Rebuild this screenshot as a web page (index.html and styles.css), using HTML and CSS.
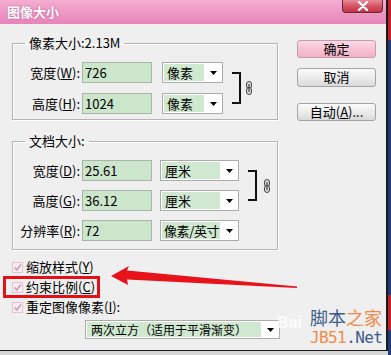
FILE: index.html
```html
<!DOCTYPE html>
<html lang="zh-CN">
<head>
<meta charset="utf-8">
<title>图像大小</title>
<link rel="stylesheet" href="styles.css">
</head>
<body>
<div class="dialog">
  <div class="titlebar">
    <span class="title">图像大小</span>
    <span class="close">
      <svg width="14" height="10" viewBox="0 0 14 10"><path d="M3 1 L11 9 M11 1 L3 9" stroke="#fff" stroke-width="2.4" stroke-linecap="round"/></svg>
    </span>
  </div>
  <div class="content">
    <div class="left">
      <fieldset class="group g1">
        <legend>像素大小:2.13M</legend>
        <div class="grid grid1">
          <label class="lbl r1">宽度(<u>W</u>):</label>
          <div class="input r1">726</div>
          <div class="select sel1 r1"><span class="val">像素</span><span class="arr"><svg width="7" height="4" viewBox="0 0 7 4"><path d="M0 0H7L3.5 4Z" fill="#000"/></svg></span></div>
          <div class="bracket"></div>
          <div class="link"><svg width="8" height="14" viewBox="0 0 8 14"><rect x="1.5" y="0.5" width="5" height="7" rx="2.5" fill="#ddd" stroke="#444"/><rect x="1.5" y="6.5" width="5" height="7" rx="2.5" fill="#ddd" stroke="#444"/><path d="M4 3V11" stroke="#444" stroke-width="1.2"/></svg></div>
          <label class="lbl r2">高度(<u>H</u>):</label>
          <div class="input r2">1024</div>
          <div class="select sel1 r2"><span class="val">像素</span><span class="arr"><svg width="7" height="4" viewBox="0 0 7 4"><path d="M0 0H7L3.5 4Z" fill="#000"/></svg></span></div>
        </div>
      </fieldset>
      <fieldset class="group g2">
        <legend>文档大小:</legend>
        <div class="grid grid2">
          <label class="lbl r1">宽度(<u>D</u>):</label>
          <div class="input r1">25.61</div>
          <div class="select sel2 r1"><span class="val">厘米</span><span class="arr"><svg width="7" height="4" viewBox="0 0 7 4"><path d="M0 0H7L3.5 4Z" fill="#000"/></svg></span></div>
          <div class="bracket"></div>
          <div class="link"><svg width="8" height="14" viewBox="0 0 8 14"><rect x="1.5" y="0.5" width="5" height="7" rx="2.5" fill="#ddd" stroke="#444"/><rect x="1.5" y="6.5" width="5" height="7" rx="2.5" fill="#ddd" stroke="#444"/><path d="M4 3V11" stroke="#444" stroke-width="1.2"/></svg></div>
          <label class="lbl r2">高度(<u>G</u>):</label>
          <div class="input r2">36.12</div>
          <div class="select sel2 r2"><span class="val">厘米</span><span class="arr"><svg width="7" height="4" viewBox="0 0 7 4"><path d="M0 0H7L3.5 4Z" fill="#000"/></svg></span></div>
          <label class="lbl r3">分辨率(<u>R</u>):</label>
          <div class="input r3">72</div>
          <div class="select sel2 r3"><span class="val tight">像素/英寸</span><span class="arr"><svg width="7" height="4" viewBox="0 0 7 4"><path d="M0 0H7L3.5 4Z" fill="#000"/></svg></span></div>
        </div>
      </fieldset>
      <div class="checks">
        <div class="check"><span class="box"><svg width="9" height="9" viewBox="0 0 9 9"><path d="M1.5 4.5 L3.8 7 L7.8 1.5" fill="none" stroke="#d896b6" stroke-width="1.6"/></svg></span>缩放样式(<u>Y</u>)</div>
        <div class="check"><span class="box"><svg width="9" height="9" viewBox="0 0 9 9"><path d="M1.5 4.5 L3.8 7 L7.8 1.5" fill="none" stroke="#d896b6" stroke-width="1.6"/></svg></span>约束比例(<u>C</u>)</div>
        <div class="check"><span class="box"><svg width="9" height="9" viewBox="0 0 9 9"><path d="M1.5 4.5 L3.8 7 L7.8 1.5" fill="none" stroke="#d896b6" stroke-width="1.6"/></svg></span>重定图像像素(<u>I</u>):</div>
      </div>
      <div class="select sel3"><span class="val">两次立方（适用于平滑渐变）</span><span class="arr"><svg width="7" height="4" viewBox="0 0 7 4"><path d="M0 0H7L3.5 4Z" fill="#000"/></svg></span></div>
    </div>
    <div class="right">
      <div class="btn ok">确定</div>
      <div class="btn cancel">取消</div>
      <div class="btn auto">自动(<u>A</u>)...</div>
    </div>
  </div>
  <div class="highlight"></div>
  <svg class="arrow" width="391" height="355" viewBox="0 0 391 355"><polygon points="111,276 129,266 127,270.5 297,286.5 297,288 127,279.5 128,285" fill="#e8121a"/></svg>
  <div class="watermark">
    <span class="bai">Bai</span>
    <div class="wm1"><span class="blue">脚本</span><span class="orange">之家</span></div>
    <div class="wm2"><span class="orange">JB51</span><span class="blue">.Net</span></div>
  </div>
</div>
<div class="below"></div>
</body>
</html>
```

FILE: styles.css
```css
html, body {
  margin: 0;
  padding: 0;
}
body {
  width: 391px;
  height: 355px;
  overflow: hidden;
  background: linear-gradient(to bottom, #c22028 0, #c22028 40px, #1f3a78 40px, #1f3a78 295px, #c22028 295px, #c22028 330px, #1f3a78 330px);
  font-family: "Noto Sans CJK SC", "Noto Sans", sans-serif;
  font-size: 13px;
  color: #000;
}
u {
  text-decoration: underline;
  text-underline-offset: 1px;
}
.dialog {
  position: relative;
  width: 386px;
  height: 350px;
  border-right: 2px solid #1a1a1a;
  border-bottom: 1px solid #1a1a1a;
  background: #efefef;
  display: flex;
  flex-direction: column;
}
.below {
  width: 388px;
  height: 4px;
  background: #d6d6d6;
}
.titlebar {
  height: 24px;
  flex: none;
  background: linear-gradient(to bottom, #f4aed0 0%, #ec94c2 60%, #e884ba 100%);
  display: flex;
  align-items: flex-start;
}
.title {
  margin-left: 7px;
  margin-top: 3px;
  line-height: 18px;
  color: #fff;
  font-weight: bold;
  font-size: 13px;
  text-shadow: 0 0 2px rgba(150, 40, 90, 0.6);
}
.close {
  margin-left: auto;
  margin-right: 3px;
  width: 41px;
  height: 13px;
  box-sizing: border-box;
  border: 1px solid #6a2838;
  border-top: none;
  border-radius: 0 0 4px 4px;
  background: linear-gradient(to bottom, #e98a9a 0%, #d2505f 55%, #c23646 100%);
  display: flex;
  align-items: center;
  justify-content: center;
}
.content {
  display: flex;
  padding: 11px 0 0 12px;
}
.left {
  width: 266px;
  display: flex;
  flex-direction: column;
}
.group {
  margin: 0;
  padding: 0;
  border: 1px solid #b4b4b4;
  box-shadow: inset 1px 1px 0 #fff, 1px 1px 0 #fff;
  min-width: 0;
}
.group legend {
  margin-left: 12px;
  padding: 0 4px;
  line-height: 16px;
  height: 16px;
}
.g2 {
  margin-top: 13px;
}
.grid {
  display: grid;
  align-items: center;
}
.grid1 {
  padding: 11px 0 5px 0;
  grid-template-columns: 67px 72px 71px 18px 12px;
  grid-template-rows: 21px 21px;
  row-gap: 10px;
}
.grid2 {
  padding: 11px 0 8px 0;
  grid-template-columns: 67px 72px 87px 18px 14px;
  grid-template-rows: 21px 21px 21px;
  row-gap: 9px;
}
.r1 { grid-row: 1; }
.r2 { grid-row: 2; }
.r3 { grid-row: 3; }
.lbl {
  grid-column: 1;
  text-align: right;
  white-space: nowrap;
  line-height: 21px;
}
.input {
  grid-column: 2;
  margin-left: 2px;
  height: 21px;
  box-sizing: border-box;
  border: 1px solid #a9b4a9;
  background: #cce6cc;
  padding-left: 2px;
  line-height: 19px;
}
.select {
  height: 21px;
  box-sizing: border-box;
  border: 1px solid #acacac;
  background: #fff;
  display: flex;
  align-items: stretch;
}
.grid .select {
  grid-column: 3;
}
.sel1 {
  margin-left: 10px;
}
.sel2 {
  margin-left: 8px;
}
.select .val {
  flex: 1;
  background: #cfe8cf;
  margin: 1px 0 1px 1px;
  padding-left: 3px;
  line-height: 17px;
  white-space: nowrap;
  overflow: hidden;
}
.select .val.tight {
  padding-left: 2px;
  letter-spacing: -0.4px;
}
.select .arr {
  width: 18px;
  flex: none;
  display: flex;
  align-items: center;
  justify-content: center;
}
.bracket {
  grid-column: 4;
  grid-row: 1 / span 2;
  align-self: stretch;
  margin: 10px 0 10px 9px;
  width: 9px;
  box-sizing: border-box;
  border: 2px solid #111;
  border-left: none;
}
.link {
  grid-column: 5;
  grid-row: 1 / span 2;
  margin-left: 4px;
  width: 8px;
  height: 14px;
  display: flex;
}
.grid2 .link {
  margin-left: 6px;
}
.link svg {
  flex: none;
}
.checks {
  margin-top: 7px;
  display: flex;
  flex-direction: column;
}
.check {
  height: 20px;
  display: flex;
  align-items: center;
  line-height: 20px;
  white-space: nowrap;
}
.check .box {
  width: 11px;
  height: 11px;
  box-sizing: border-box;
  border: 1px solid #e0c4d2;
  background: #f7eef2;
  margin-right: 3px;
  display: flex;
  align-items: center;
  justify-content: center;
}
.sel3 {
  margin-top: 3px;
  margin-left: 73px;
  width: 195px;
  height: 19px;
  font-size: 12px;
}
.sel3 .val {
  line-height: 15px;
  padding-left: 4px;
}
.right {
  margin-left: 19px;
  width: 79px;
  display: flex;
  flex-direction: column;
}
.btn {
  height: 18px;
  box-sizing: border-box;
  border: 1px solid #a4a4a4;
  border-radius: 3px;
  background: linear-gradient(to bottom, #fafafa 0%, #ececec 50%, #dadada 100%);
  text-align: center;
  line-height: 16px;
}
.ok {
  margin-top: 5px;
  border-color: #c99aac;
  background: linear-gradient(to bottom, #fbdbe6 0%, #f6c2d4 50%, #f2b2c8 100%);
}
.cancel {
  margin-top: 10px;
  height: 19px;
}
.auto {
  margin-top: 16px;
}
.highlight {
  position: absolute;
  left: 3px;
  top: 276px;
  width: 97px;
  height: 22px;
  box-sizing: border-box;
  border: 3px solid #e41018;
}
.arrow {
  position: absolute;
  left: 0;
  top: 0;
  pointer-events: none;
}
.watermark {
  position: absolute;
  left: 310px;
  top: 310px;
  width: 76px;
}
.bai {
  position: absolute;
  left: -33px;
  top: 4px;
  font-family: "Liberation Sans", sans-serif;
  font-weight: bold;
  font-size: 16px;
  line-height: 18px;
  color: rgba(255, 255, 255, 0.75);
}
.wm1 {
  position: relative;
  font-family: "Liberation Sans", "Noto Sans CJK SC", sans-serif;
  font-size: 18px;
  line-height: 18px;
  height: 18px;
}
.wm2 {
  position: relative;
  margin-top: 2px;
  font-family: "DejaVu Sans Mono", monospace;
  font-size: 16px;
  line-height: 16px;
  letter-spacing: -0.6px;
}
.blue {
  color: #3d5c8c;
}
.orange {
  color: #ef8a48;
}
```
